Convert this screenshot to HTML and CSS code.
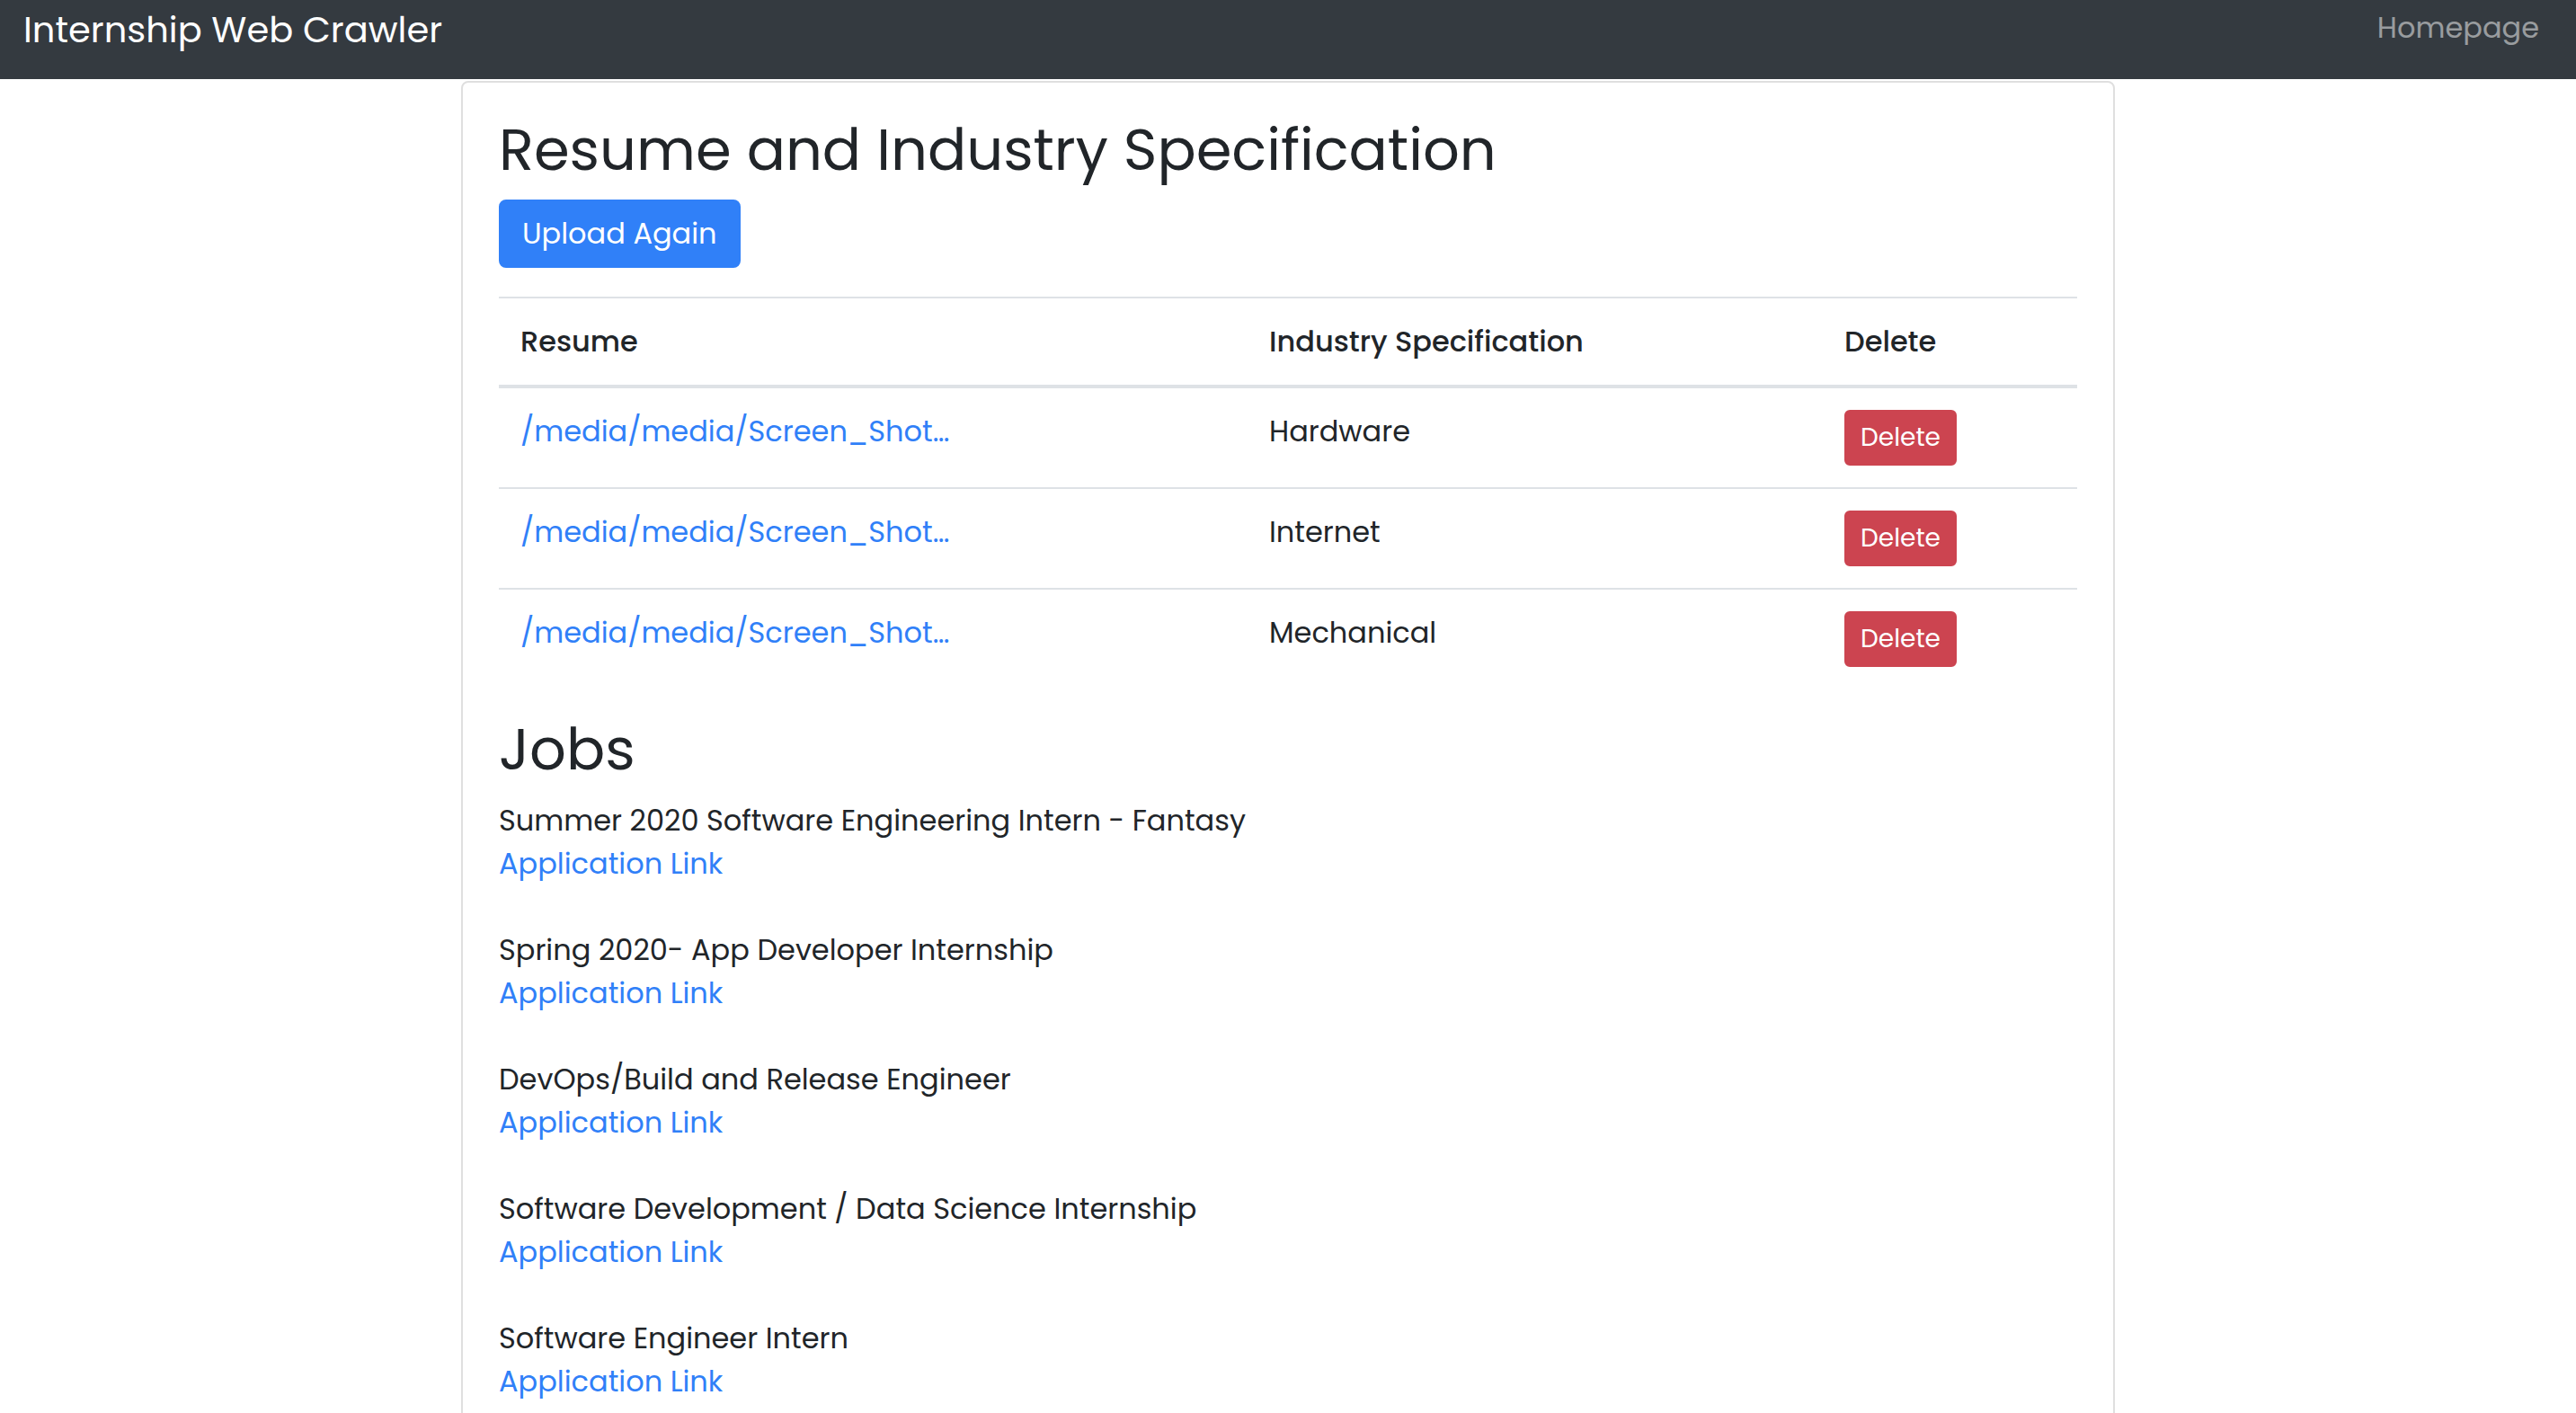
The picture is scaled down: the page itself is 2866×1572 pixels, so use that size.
FILE: index.html
```html
<!DOCTYPE html>
<html lang="en">
<head>
<meta charset="utf-8">
<title>Internship Web Crawler</title>
<link rel="stylesheet" href="styles.css">
</head>
<body>
<nav class="navbar">
  <a class="brand" href="#">Internship Web Crawler</a>
  <a class="nav-link" href="#">Homepage</a>
</nav>
<main class="card">
  <div class="card-body">
    <h2 class="title">Resume and Industry Specification</h2>
    <form class="upload-form">
      <button type="button" class="btn btn-primary">Upload Again</button>
    </form>
    <table class="table">
      <thead>
        <tr>
          <th class="col-resume">Resume</th>
          <th class="col-industry">Industry Specification</th>
          <th class="col-delete">Delete</th>
        </tr>
      </thead>
      <tbody>
        <tr>
          <td><a class="link" href="#">/media/media/Screen_Shot…</a></td>
          <td>Hardware</td>
          <td><button type="button" class="btn-danger">Delete</button></td>
        </tr>
        <tr>
          <td><a class="link" href="#">/media/media/Screen_Shot…</a></td>
          <td>Internet</td>
          <td><button type="button" class="btn-danger">Delete</button></td>
        </tr>
        <tr>
          <td><a class="link" href="#">/media/media/Screen_Shot…</a></td>
          <td>Mechanical</td>
          <td><button type="button" class="btn-danger">Delete</button></td>
        </tr>
      </tbody>
    </table>
    <h2 class="title">Jobs</h2>
    <div class="jobs">
      <div class="job">
        <div class="job-title">Summer 2020 Software Engineering Intern - Fantasy</div>
        <a class="link" href="#">Application Link</a>
      </div>
      <div class="job">
        <div class="job-title">Spring 2020- App Developer Internship</div>
        <a class="link" href="#">Application Link</a>
      </div>
      <div class="job">
        <div class="job-title">DevOps/Build and Release Engineer</div>
        <a class="link" href="#">Application Link</a>
      </div>
      <div class="job">
        <div class="job-title">Software Development / Data Science Internship</div>
        <a class="link" href="#">Application Link</a>
      </div>
      <div class="job">
        <div class="job-title">Software Engineer Intern</div>
        <a class="link" href="#">Application Link</a>
      </div>
    </div>
  </div>
</main>
</body>
</html>
```
FILE: styles.css
```css
html, body {
  margin: 0;
  padding: 0;
  background: #ffffff;
}

body {
  font-family: "Poppins", "Inter", "Noto Sans", sans-serif;
  font-size: 32px;
  line-height: 48px;
  color: #212529;
}

.navbar {
  display: flex;
  justify-content: space-between;
  align-items: flex-start;
  height: 88px;
  box-sizing: border-box;
  padding: 13px 41px 0 26px;
  background: #343a40;
}

.brand {
  font-size: 40px;
  line-height: 40px;
  color: #ffffff;
  text-decoration: none;
}

.nav-link {
  margin-top: 2px;
  font-size: 32px;
  line-height: 32px;
  color: rgba(255, 255, 255, 0.5);
  text-decoration: none;
}

.card {
  display: block;
  width: 1840px;
  box-sizing: border-box;
  margin: 2px auto 0;
  border: 2px solid #dfdfdf;
  border-radius: 8px;
  background: #ffffff;
}

.card-body {
  padding: 37px 40px 40px;
}

.title {
  margin: 0 0 16px;
  font-size: 64px;
  line-height: 76.8px;
  font-weight: 400;
}

.upload-form {
  margin: 0 0 32px;
}

.btn {
  display: inline-block;
  font-family: inherit;
  font-size: 32px;
  line-height: 48px;
  padding: 12px 24px;
  border-radius: 8px;
  cursor: pointer;
}

.btn-primary {
  color: #ffffff;
  background: #3080f8;
  border: 2px solid #3080f8;
}

.table {
  width: 100%;
  border-collapse: collapse;
  margin-bottom: 30px;
}

.table th,
.table td {
  padding: 24px;
  text-align: left;
  vertical-align: top;
  border-top: 2px solid #dee2e6;
}

.table th {
  font-weight: 500;
  border-bottom: 4px solid #dee2e6;
}

.col-resume { width: 785px; }
.col-industry { width: 592px; }
.col-delete { width: 235px; }

.btn-danger {
  display: inline-block;
  font-family: inherit;
  font-size: 28px;
  line-height: 42px;
  padding: 8px 16px;
  color: #ffffff;
  background: #cc4450;
  border: 2px solid #cc4450;
  border-radius: 6px;
  cursor: pointer;
}

.link {
  color: #3080f8;
  text-decoration: none;
}

.job {
  margin-bottom: 48px;
}
```
